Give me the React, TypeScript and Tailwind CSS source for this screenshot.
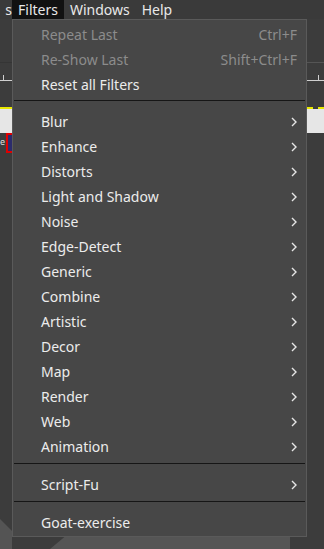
import React from "react";

type Item =
  | { kind: "item"; label: string; shortcut?: string; disabled?: boolean; sub?: boolean }
  | { kind: "sep"; h: string };

const items: Item[] = [
  { kind: "item", label: "Repeat Last", shortcut: "Ctrl+F", disabled: true },
  { kind: "item", label: "Re-Show Last", shortcut: "Shift+Ctrl+F", disabled: true },
  { kind: "item", label: "Reset all Filters" },
  { kind: "sep", h: "h-[12px] pt-[3px]" },
  { kind: "item", label: "Blur", sub: true },
  { kind: "item", label: "Enhance", sub: true },
  { kind: "item", label: "Distorts", sub: true },
  { kind: "item", label: "Light and Shadow", sub: true },
  { kind: "item", label: "Noise", sub: true },
  { kind: "item", label: "Edge-Detect", sub: true },
  { kind: "item", label: "Generic", sub: true },
  { kind: "item", label: "Combine", sub: true },
  { kind: "item", label: "Artistic", sub: true },
  { kind: "item", label: "Decor", sub: true },
  { kind: "item", label: "Map", sub: true },
  { kind: "item", label: "Render", sub: true },
  { kind: "item", label: "Web", sub: true },
  { kind: "item", label: "Animation", sub: true },
  { kind: "sep", h: "h-[13px] pt-[4px]" },
  { kind: "item", label: "Script-Fu", sub: true },
  { kind: "sep", h: "h-[13px] pt-[4px]" },
  { kind: "item", label: "Goat-exercise" },
];

function Chevron() {
  return (
    <svg width="6" height="10" viewBox="0 0 6 10" className="shrink-0">
      <path d="M1 1 L5 5 L1 9" fill="none" stroke="#e6e6e6" strokeWidth="1.4" />
    </svg>
  );
}

function Ruler() {
  return (
    <div className="relative h-[18px] border-b border-[#cfcfcf]">
      <div className="absolute bottom-0 left-[3px] h-[5px] w-px bg-[#cfcfcf]" />
    </div>
  );
}

export default function App() {
  return (
    <div
      className="relative h-[549px] w-[324px] overflow-hidden bg-[#3c3c3c] text-[#e8e8e8]"
      style={{ fontFamily: '"Noto Sans", "Open Sans", sans-serif' }}
    >
      {/* menubar */}
      <div className="flex h-[19px] items-center bg-[#3a3a3a] text-[14px] leading-[19px]">
        <span className="w-[12px] overflow-hidden text-right">s</span>
        <span className="bg-[#111111] px-[6px]">Filters</span>
        <span className="px-[6px]">Windows</span>
        <span className="px-[6px]">Help</span>
      </div>

      {/* background workspace, left */}
      <div className="flex h-[530px] justify-between">
        <div className="flex w-[12px] flex-col">
          <div className="h-[44px] border-b border-[#353535]" />
          <Ruler />
          <div className="h-[28px] border-b-2 border-dashed border-[#e8e800]" />
          <div className="h-[24px] bg-[#e6e6e6]" />
          <div className="flex h-[22px] items-start">
            <span className="text-[9px] leading-[18px] text-[#dddddd]">e</span>
            <div className="ml-auto h-[20px] w-[6px] border-2 border-r-0 border-[#e00000] bg-[#2c2c6c]" />
          </div>
          <div className="flex-1" />
          <div className="h-[30px] bg-[#545454] [clip-path:polygon(0_0,100%_40%,100%_100%,0_100%)]" />
        </div>
        <div className="flex w-[17px] flex-col">
          <div className="h-[44px] border-b border-[#555555]" />
          <div className="relative h-[18px] border-b border-[#cfcfcf]">
            <div className="absolute bottom-0 left-[11px] h-[5px] w-px bg-[#cfcfcf]" />
          </div>
          <div className="h-[28px] border-b-2 border-dashed border-[#e8e800]" />
          <div className="h-[24px] bg-[#e6e6e6]" />
        </div>
      </div>

      {/* bottom shapes */}
      <div className="absolute bottom-0 left-[50px] h-[12px] w-[240px] bg-[#555555] [clip-path:polygon(6%_0,100%_0,100%_100%,0_100%)]" />

      {/* dropdown menu */}
      <div className="absolute left-[12px] top-[19px] w-[295px] border border-[#5a5a5a] bg-[#474747] pt-[2px] pb-px text-[14px]">
        {items.map((it, i) =>
          it.kind === "sep" ? (
            <div key={i} className={it.h}>
              <div className="mx-px h-px bg-[#161616]" />
            </div>
          ) : (
            <div key={i} className="flex h-[25px] items-center pl-[28px] pr-[9px]">
              <span className={it.disabled ? "text-[#8c8c8c]" : "text-[#ececec]"}>{it.label}</span>
              <span className="flex-1" />
              {it.shortcut && <span className="text-[#8c8c8c]">{it.shortcut}</span>}
              {it.sub && <Chevron />}
            </div>
          )
        )}
      </div>
    </div>
  );
}
